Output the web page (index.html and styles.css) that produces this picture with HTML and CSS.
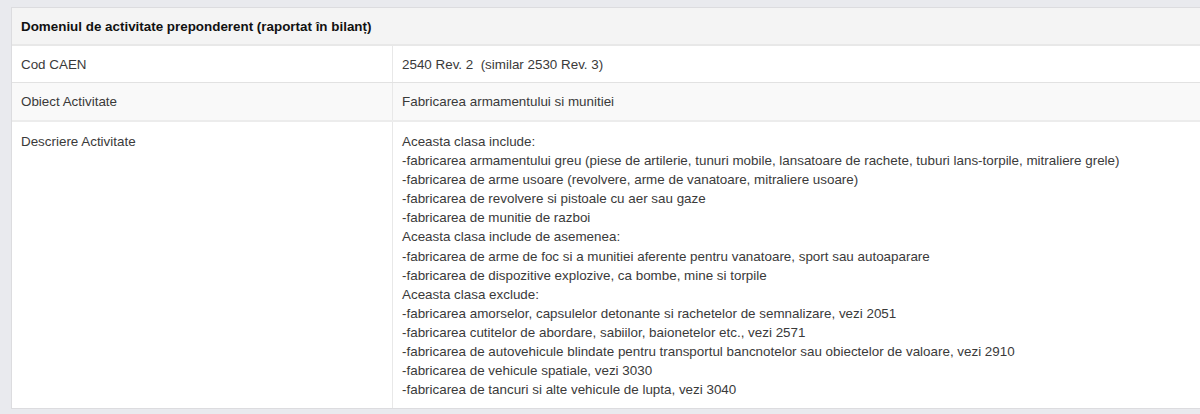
FILE: index.html
```html
<!doctype html>
<html lang="ro">
<head>
    <meta charset="UTF-8">
    <title>Domeniul de activitate</title>
    <link rel="stylesheet" href="styles.css">
</head>
<body>
<div class="panel">
    <table class="info">
        <thead>
        <tr>
            <th colspan="2">Domeniul de activitate preponderent (raportat în bilanț)</th>
        </tr>
        </thead>
        <tbody>
        <tr>
            <td class="label">Cod CAEN</td>
            <td>2540 Rev. 2&nbsp; (similar 2530 Rev. 3)</td>
        </tr>
        <tr class="alt">
            <td class="label">Obiect Activitate</td>
            <td>Fabricarea armamentului si munitiei</td>
        </tr>
        <tr class="desc">
            <td class="label">Descriere Activitate</td>
            <td>
                Aceasta clasa include:<br>
                -fabricarea armamentului greu (piese de artilerie, tunuri mobile, lansatoare de rachete, tuburi lans-torpile, mitraliere grele)<br>
                -fabricarea de arme usoare (revolvere, arme de vanatoare, mitraliere usoare)<br>
                -fabricarea de revolvere si pistoale cu aer sau gaze<br>
                -fabricarea de munitie de razboi<br>
                Aceasta clasa include de asemenea:<br>
                -fabricarea de arme de foc si a munitiei aferente pentru vanatoare, sport sau autoaparare<br>
                -fabricarea de dispozitive explozive, ca bombe, mine si torpile<br>
                Aceasta clasa exclude:<br>
                -fabricarea amorselor, capsulelor detonante si rachetelor de semnalizare, vezi 2051<br>
                -fabricarea cutitelor de abordare, sabiilor, baionetelor etc., vezi 2571<br>
                -fabricarea de autovehicule blindate pentru transportul bancnotelor sau obiectelor de valoare, vezi 2910<br>
                -fabricarea de vehicule spatiale, vezi 3030<br>
                -fabricarea de tancuri si alte vehicule de lupta, vezi 3040
            </td>
        </tr>
        </tbody>
    </table>
</div>
</body>
</html>
```

FILE: styles.css
```css
html, body {
    margin: 0;
    padding: 0;
}

body {
    background-color: #e9eaee;
    font-family: "Liberation Sans", Arial, sans-serif;
    font-size: 13.4px;
    color: #3a3a3a;
    overflow: hidden;
}

.panel {
    margin: 7px 0 0 11px;
    width: 1220px;
    border-top: 1px solid #dcdcdf;
    border-left: 1px solid #dcdcdf;
    border-bottom: 1px solid #dcdcdf;
    background-color: #fff;
}

.info {
    width: 100%;
    border-collapse: collapse;
}

.info th,
.info td {
    padding: 9px 9px 8px;
    line-height: 19px;
    text-align: left;
    vertical-align: top;
}

.info th {
    background-color: #f4f4f4;
    font-weight: bold;
    color: #111;
    border-bottom: 2px solid #e8e8e8;
}

.info td {
    border-bottom: 1px solid #e2e2e2;
}

.info tr:last-child td {
    border-bottom: 0;
}

.info .label {
    width: 362px;
    border-right: 1px solid #e8e8e8;
}

.info .alt td {
    background-color: #f9f9f9;
    padding-bottom: 9px;
    border-bottom: 2px solid #ececec;
}

.info .desc td {
    padding-top: 10px;
    padding-bottom: 9px;
    line-height: 19.1px;
}
```
